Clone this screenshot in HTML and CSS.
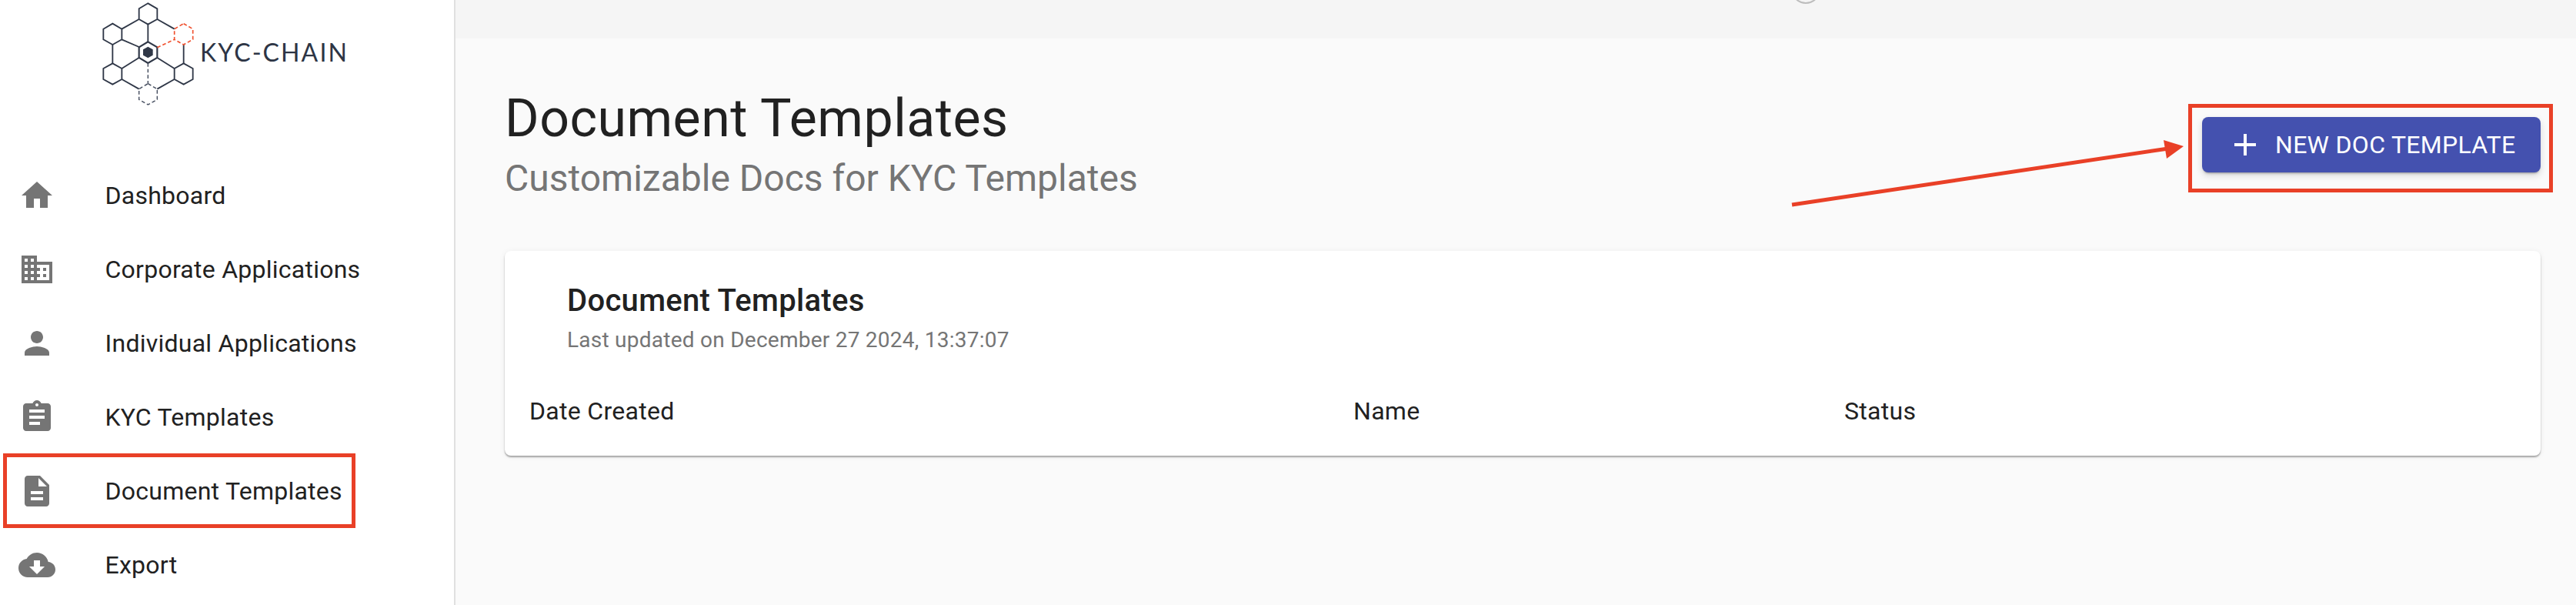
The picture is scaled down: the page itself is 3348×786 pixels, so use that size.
FILE: index.html
```html
<!DOCTYPE html>
<html lang="en">
<head>
<meta charset="utf-8">
<title>Document Templates</title>
<link rel="stylesheet" href="styles.css">
</head>
<body>
<div class="app">
  <aside class="sidebar">
    <div class="logo">
      <svg class="logo-mark" viewBox="0 0 357 411" aria-hidden="true">
        <g class="lk">
          <path d="M143 72 76 110M214 72 281 110M178 92V160M76 151 143 180M40 171V244M143 222 76 264M317 171V244M214 222 281 264M76 306 143 344M281 306 214 344"/>
          <path d="M178 10 214 31V72L178 92 143 72V31Z"/>
          <path d="M40 89 76 110V151L40 171 4 151V110Z"/>
          <path d="M40 244 76 264V306L40 326 4 306V264Z"/>
          <path d="M317 244 353 264V306L317 326 281 306V264Z"/>
          <path d="M178 160 214 181V222L178 243 143 222V181Z" class="thick"/>
          <path d="M178 179 197 190V212L178 223 159 212V190Z" class="solid"/>
        </g>
        <g class="dash">
          <path d="M178 243V323"/>
          <path d="M178 323 214 344V385L178 405 143 385V344Z"/>
        </g>
        <g class="dash red">
          <path d="M214 182 281 151"/>
          <path d="M317 89 353 110V151L317 171 281 151V110Z"/>
        </g>
      </svg>
      <span class="logo-text">KYC-CHAIN</span>
    </div>
    <nav class="nav">
      <a class="nav-item">
        <svg class="nav-icon" viewBox="0 0 24 24"><path d="M10 20v-6h4v6h5v-8h3L12 3 2 12h3v8z"/></svg>
        <span>Dashboard</span>
      </a>
      <a class="nav-item">
        <svg class="nav-icon" viewBox="0 0 24 24"><path d="M12 7V3H2v18h20V7H12zM6 19H4v-2h2v2zm0-4H4v-2h2v2zm0-4H4V9h2v2zm0-4H4V5h2v2zm4 12H8v-2h2v2zm0-4H8v-2h2v2zm0-4H8V9h2v2zm0-4H8V5h2v2zm10 12h-8v-2h2v-2h-2v-2h2v-2h-2V9h8v10zm-2-8h-2v2h2v-2zm0 4h-2v2h2v-2z"/></svg>
        <span>Corporate Applications</span>
      </a>
      <a class="nav-item">
        <svg class="nav-icon" viewBox="0 0 24 24"><path d="M12 12c2.21 0 4-1.79 4-4s-1.79-4-4-4-4 1.79-4 4 1.79 4 4 4zm0 2c-2.67 0-8 1.34-8 4v2h16v-2c0-2.66-5.33-4-8-4z"/></svg>
        <span>Individual Applications</span>
      </a>
      <a class="nav-item">
        <svg class="nav-icon" viewBox="0 0 24 24"><path d="M19 3h-4.18C14.4 1.84 13.3 1 12 1c-1.3 0-2.4.84-2.82 2H5c-1.1 0-2 .9-2 2v14c0 1.1.9 2 2 2h14c1.1 0 2-.9 2-2V5c0-1.1-.9-2-2-2zm-7 0c.55 0 1 .45 1 1s-.45 1-1 1-1-.45-1-1 .45-1 1-1zm2 14H7v-2h7v2zm3-4H7v-2h10v2zm0-4H7V7h10v2z"/></svg>
        <span>KYC Templates</span>
      </a>
      <a class="nav-item">
        <svg class="nav-icon" viewBox="0 0 24 24"><path d="M14 2H6c-1.1 0-1.99.9-1.99 2L4 20c0 1.1.89 2 1.99 2H18c1.1 0 2-.9 2-2V8l-6-6zm2 16H8v-2h8v2zm0-4H8v-2h8v2zm-3-5V3.5L18.5 9H13z"/></svg>
        <span>Document Templates</span>
      </a>
      <a class="nav-item">
        <svg class="nav-icon" viewBox="0 0 24 24"><path d="M19.35 10.04C18.67 6.59 15.64 4 12 4 9.11 4 6.6 5.64 5.35 8.04 2.34 8.36 0 10.91 0 14c0 3.31 2.69 6 6 6h13c2.76 0 5-2.24 5-5 0-2.64-2.05-4.78-4.65-4.96zM17 13l-5 5-5-5h3V9h4v4h3z"/></svg>
        <span>Export</span>
      </a>
    </nav>
  </aside>
  <main class="main">
    <div class="topbar"><span class="avatar"></span></div>
    <div class="content">
      <header class="page-head">
        <div>
          <h1 class="page-title">Document Templates</h1>
          <p class="page-sub">Customizable Docs for KYC Templates</p>
        </div>
        <button class="btn" type="button">
          <svg class="btn-icon" viewBox="0 0 28 28"><path d="M12 0h4v12h12v4H16v12h-4V16H0v-4h12z"/></svg>
          <span>NEW DOC TEMPLATE</span>
        </button>
      </header>
      <section class="card">
        <div class="card-head">
          <h2 class="card-title">Document Templates</h2>
          <p class="card-sub">Last updated on December 27 2024, 13:37:07</p>
        </div>
        <div class="table-head">
          <span>Date Created</span>
          <span>Name</span>
          <span>Status</span>
        </div>
      </section>
    </div>
  </main>
</div>
<div class="mark mark-nav"></div>
<div class="mark mark-btn"></div>
<svg class="arrow" viewBox="0 0 520 90" aria-hidden="true">
  <path d="M1 86 490 13" class="arrow-line"/>
  <path d="M510 10 484 2 488 26Z" class="arrow-head"/>
</svg>
</body>
</html>
```
FILE: styles.css
```css
* { box-sizing: border-box; }
html, body { margin: 0; height: 786px; overflow: hidden; }
body { position: relative; font-family: Roboto, "Liberation Sans", sans-serif; color: #212121; background: #fafafa; }
.app { display: grid; grid-template-columns: 592px 1fr; height: 786px; }

.sidebar { background: #fff; border-right: 2px solid #e0e0e0; overflow: hidden; }
.logo { display: flex; align-items: flex-start; height: 206px; padding-left: 133px; }
.logo-mark { width: 119px; height: 137px; flex: none; margin-top: 1px; }
.lk path { fill: none; stroke: #2f3747; stroke-width: 5.5; }
.lk .thick { stroke-width: 6.5; }
.lk .solid { fill: #2f3747; stroke: none; }
.dash path { fill: none; stroke: #4a5263; stroke-width: 4.5; stroke-dasharray: 14 9; }
.dash.red path { stroke: #f0512f; stroke-width: 5; }
.logo-text { font-family: Lato, sans-serif; font-size: 32px; line-height: 32px; letter-spacing: 2.1px; color: #2d3545; margin: 52px 0 0 8px; }

.nav { display: flex; flex-direction: column; }
.nav-item { display: flex; align-items: center; height: 96px; padding-left: 24px; font-size: 32px; letter-spacing: .25px; gap: 64.5px; }
.nav-icon { width: 48px; height: 48px; fill: #757575; flex: none; }

.main { background: #fafafa; min-width: 0; }
.topbar { height: 50px; background: #f5f5f5; overflow: hidden; padding-left: 1736px; }
.avatar { display: block; width: 38px; height: 38px; margin-top: -33px; border-radius: 50%; border: 2px solid #bdbdbd; }

.content { padding: 64px 46px 0 64px; }
.page-head { display: flex; justify-content: space-between; align-items: flex-start; }
.page-title { margin: 0; font-size: 68px; line-height: 80px; letter-spacing: .5px; font-weight: 400; color: #212121; }
.page-sub { margin: 8px 0 0; font-size: 48px; line-height: 60px; color: #757575; }
.btn { display: flex; align-items: center; width: 440px; height: 72px; margin: 38px 0 0; padding: 0 0 0 42px; gap: 25px; border: 0; border-radius: 8px; background: #4451af; color: #fff; font-family: inherit; font-size: 32px; letter-spacing: .3px; box-shadow: 0 3px 3px -2px rgba(0,0,0,.35), 0 4px 10px rgba(0,0,0,.14); }
.btn-icon { width: 28px; height: 28px; fill: #fff; flex: none; }

.card { height: 266px; margin-top: 64px; background: #fff; border-radius: 8px; box-shadow: 0 2px 2px rgba(0,0,0,.32), 0 1px 8px rgba(0,0,0,.06); }
.card-head { padding: 42px 0 0 81px; }
.card-title { margin: 0; font-size: 40px; line-height: 46px; font-weight: 500; letter-spacing: .3px; }
.card-sub { margin: 11px 0 0; font-size: 28px; line-height: 34px; letter-spacing: .25px; color: #757575; }
.table-head { display: grid; grid-template-columns: 1071px 638px 1fr; padding: 57px 0 0 32px; font-size: 32px; line-height: 36px; letter-spacing: .3px; }

.mark { position: absolute; border: 5px solid #e94027; }
.mark-nav { left: 4px; top: 589px; width: 458px; height: 97px; }
.mark-btn { left: 2844px; top: 135px; width: 474px; height: 115px; }
.arrow { position: absolute; left: 2328px; top: 180px; width: 520px; height: 90px; }
.arrow-line { fill: none; stroke: #e94027; stroke-width: 5; }
.arrow-head { fill: #e94027; }
```
